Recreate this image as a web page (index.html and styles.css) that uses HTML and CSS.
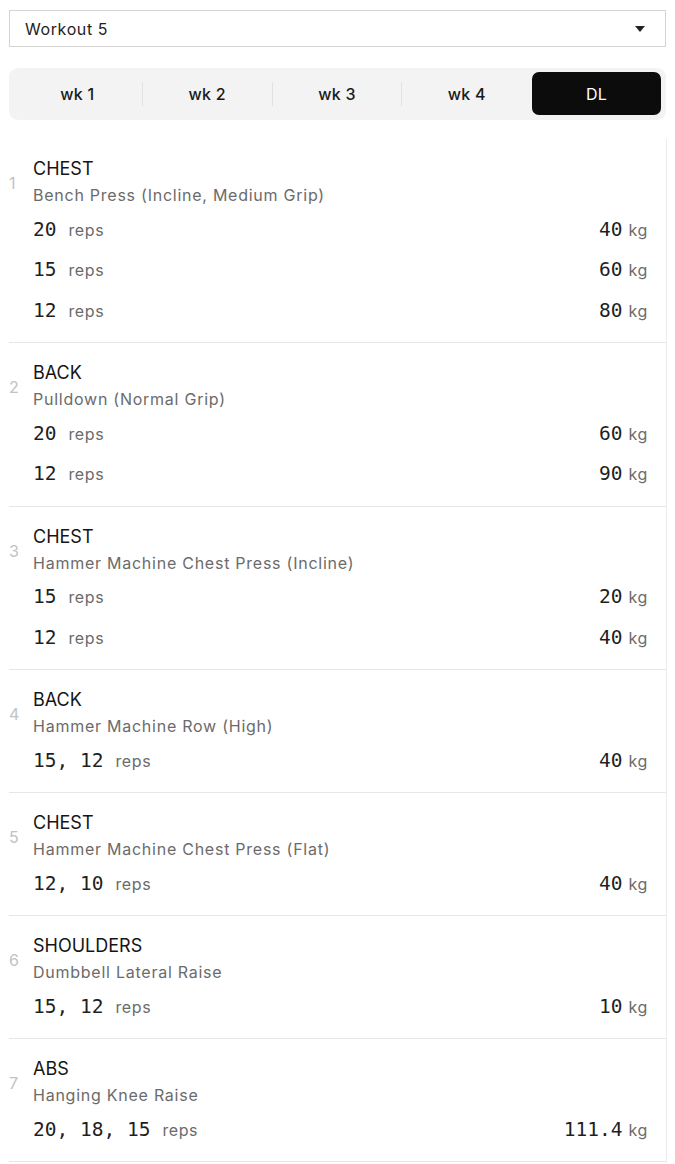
FILE: index.html
```html
<!DOCTYPE html>
<html lang="en">
<head>
<meta charset="utf-8">
<title>Workout</title>
<link rel="stylesheet" href="styles.css">
</head>
<body>
<div class="page">
  <div class="select">
    <span class="select__value">Workout 5</span>
    <svg class="select__caret" width="10" height="6" viewBox="0 0 10 6"><path d="M0 0h10L5 6z" fill="#222"/></svg>
  </div>

  <div class="tabs">
    <div class="tab">wk 1</div>
    <div class="tab-sep"></div>
    <div class="tab">wk 2</div>
    <div class="tab-sep"></div>
    <div class="tab">wk 3</div>
    <div class="tab-sep"></div>
    <div class="tab">wk 4</div>
    <div class="tab-sep tab-sep--hidden"></div>
    <div class="tab tab--active">DL</div>
  </div>

  <div class="list">
    <div class="item">
      <div class="item__num">1</div>
      <div class="item__body">
        <div class="item__title">CHEST</div>
        <div class="item__sub">Bench Press (Incline, Medium Grip)</div>
        <div class="sets">
          <div class="set"><span><span class="mono">20</span><span class="unit unit--reps">reps</span></span><span><span class="mono">40</span><span class="unit">kg</span></span></div>
          <div class="set"><span><span class="mono">15</span><span class="unit unit--reps">reps</span></span><span><span class="mono">60</span><span class="unit">kg</span></span></div>
          <div class="set"><span><span class="mono">12</span><span class="unit unit--reps">reps</span></span><span><span class="mono">80</span><span class="unit">kg</span></span></div>
        </div>
      </div>
    </div>

    <div class="item">
      <div class="item__num">2</div>
      <div class="item__body">
        <div class="item__title">BACK</div>
        <div class="item__sub">Pulldown (Normal Grip)</div>
        <div class="sets">
          <div class="set"><span><span class="mono">20</span><span class="unit unit--reps">reps</span></span><span><span class="mono">60</span><span class="unit">kg</span></span></div>
          <div class="set"><span><span class="mono">12</span><span class="unit unit--reps">reps</span></span><span><span class="mono">90</span><span class="unit">kg</span></span></div>
        </div>
      </div>
    </div>

    <div class="item">
      <div class="item__num">3</div>
      <div class="item__body">
        <div class="item__title">CHEST</div>
        <div class="item__sub">Hammer Machine Chest Press (Incline)</div>
        <div class="sets">
          <div class="set"><span><span class="mono">15</span><span class="unit unit--reps">reps</span></span><span><span class="mono">20</span><span class="unit">kg</span></span></div>
          <div class="set"><span><span class="mono">12</span><span class="unit unit--reps">reps</span></span><span><span class="mono">40</span><span class="unit">kg</span></span></div>
        </div>
      </div>
    </div>

    <div class="item">
      <div class="item__num">4</div>
      <div class="item__body">
        <div class="item__title">BACK</div>
        <div class="item__sub">Hammer Machine Row (High)</div>
        <div class="sets">
          <div class="set"><span><span class="mono">15, 12</span><span class="unit unit--reps">reps</span></span><span><span class="mono">40</span><span class="unit">kg</span></span></div>
        </div>
      </div>
    </div>

    <div class="item">
      <div class="item__num">5</div>
      <div class="item__body">
        <div class="item__title">CHEST</div>
        <div class="item__sub">Hammer Machine Chest Press (Flat)</div>
        <div class="sets">
          <div class="set"><span><span class="mono">12, 10</span><span class="unit unit--reps">reps</span></span><span><span class="mono">40</span><span class="unit">kg</span></span></div>
        </div>
      </div>
    </div>

    <div class="item">
      <div class="item__num">6</div>
      <div class="item__body">
        <div class="item__title">SHOULDERS</div>
        <div class="item__sub">Dumbbell Lateral Raise</div>
        <div class="sets">
          <div class="set"><span><span class="mono">15, 12</span><span class="unit unit--reps">reps</span></span><span><span class="mono">10</span><span class="unit">kg</span></span></div>
        </div>
      </div>
    </div>

    <div class="item">
      <div class="item__num">7</div>
      <div class="item__body">
        <div class="item__title">ABS</div>
        <div class="item__sub">Hanging Knee Raise</div>
        <div class="sets">
          <div class="set"><span><span class="mono">20, 18, 15</span><span class="unit unit--reps">reps</span></span><span><span class="mono">111.4</span><span class="unit">kg</span></span></div>
        </div>
      </div>
    </div>
  </div>
</div>
</body>
</html>
```

FILE: styles.css
```css
* { box-sizing: border-box; }
html, body { margin: 0; padding: 0; background: #fff; }
body {
  font-family: "Inter", "Open Sans", sans-serif;
  color: #1a1a1a;
}
.page {
  padding: 10px 9px 0 9px;
}
.select {
  height: 37px;
  border: 1px solid #d4d4d4;
  display: flex;
  align-items: center;
  justify-content: space-between;
  padding: 0 20px 0 15px;
  font-size: 16px;
  letter-spacing: 0.6px;
}
.select__value { color: #222; }
.select__caret { display: block; }

.tabs {
  margin-top: 21px;
  height: 52px;
  background: #f3f3f3;
  border-radius: 9px;
  padding: 4px 5px 5px 4px;
  display: flex;
  align-items: stretch;
}
.tab {
  flex: 1 1 0;
  display: flex;
  align-items: center;
  justify-content: center;
  font-size: 16px;
  font-weight: 500;
  letter-spacing: 0.3px;
  color: #1a1a1a;
  border-radius: 7px;
}
.tab--active {
  background: #0c0c0c;
  color: #fff;
  font-weight: 400;
}
.tab-sep {
  width: 1px;
  margin: 10px 0 9px;
  background: #e2e2e2;
}
.tab-sep--hidden { background: transparent; }

.list {
  margin-top: 19px;
  border-right: 1px solid #ececec;
  margin-right: -1px;
}
.item {
  display: flex;
  border-bottom: 1px solid #e6e6e6;
  padding: 15px 18px 15px 0;
}
.item__num {
  width: 24px;
  flex: none;
  padding-top: 17px;
  font-size: 16px;
  color: #c2c2c2;
  line-height: 24px;
}
.item__body { flex: 1; }
.item__title {
  font-size: 18px;
  line-height: 28px;
  padding-top: 1px;
  color: #151515;
}
.item__sub {
  font-size: 16px;
  line-height: 24px;
  color: #6b6b6b;
  letter-spacing: 0.75px;
}
.sets {
  margin-top: 2px;
  display: flex;
  flex-direction: column;
  gap: 3.5px;
}
.set {
  height: 37px;
  padding-top: 3px;
  display: flex;
  align-items: center;
  justify-content: space-between;
}
.mono {
  font-family: "DejaVu Sans Mono", "Liberation Mono", monospace;
  font-size: 19.5px;
  color: #1f1f1f;
}
.unit {
  font-size: 16px;
  color: #6b6b6b;
  letter-spacing: 0.6px;
  margin-left: 6px;
}
.unit--reps { margin-left: 12px; }
```
